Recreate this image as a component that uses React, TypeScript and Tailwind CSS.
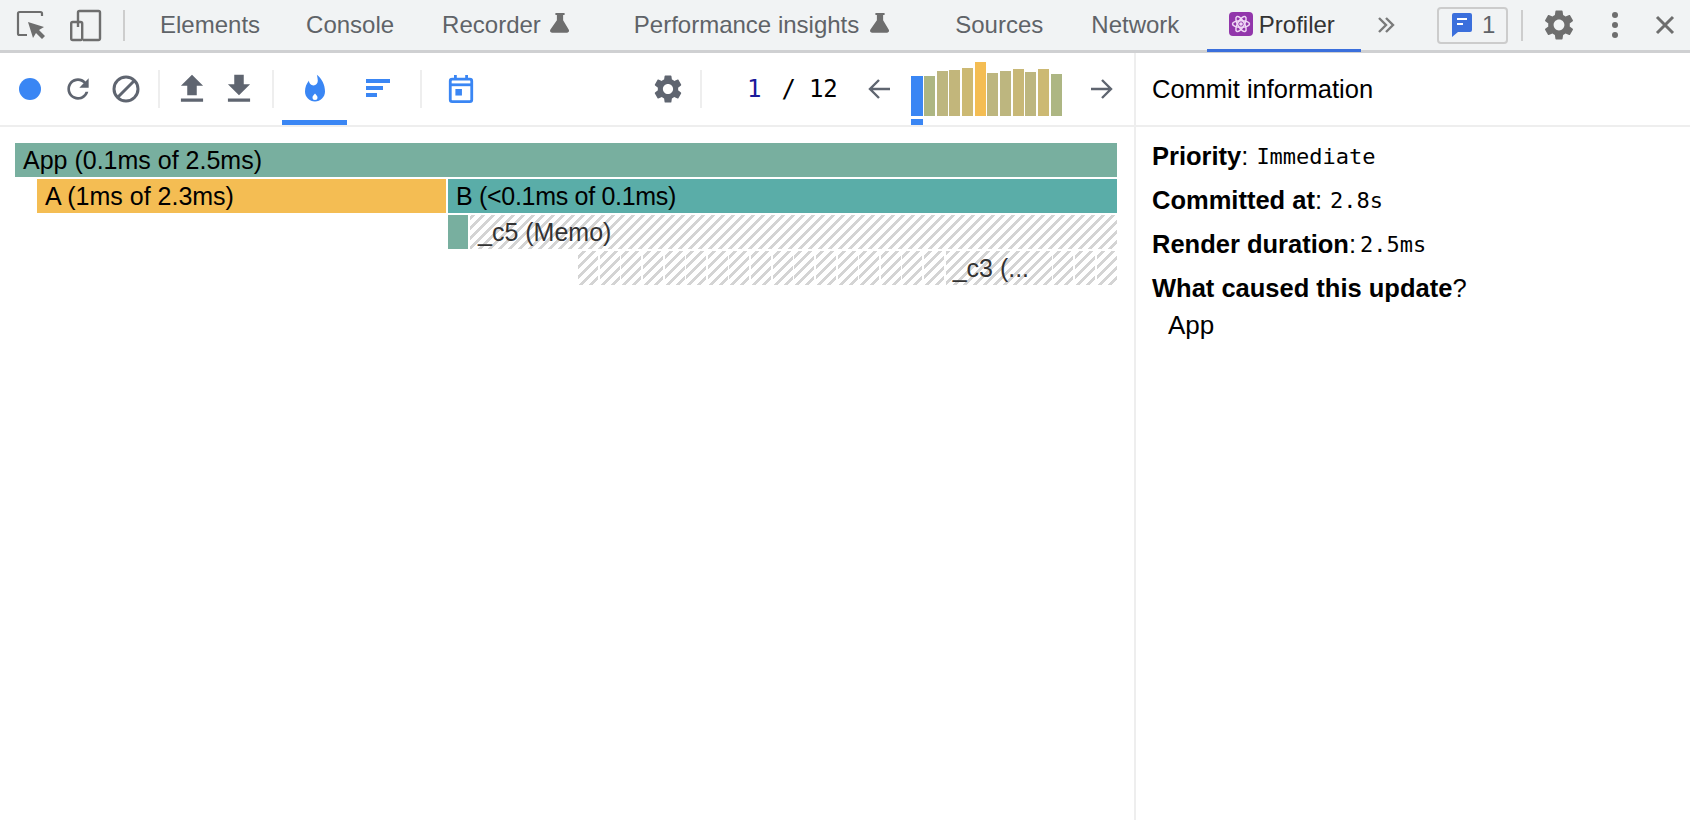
import type { ReactNode } from "react";

const GEAR =
  "M19.14 12.94c.04-.3.06-.61.06-.94 0-.32-.02-.64-.07-.94l2.03-1.58c.18-.14.23-.41.12-.61l-1.92-3.32c-.12-.22-.37-.29-.59-.22l-2.39.96c-.5-.38-1.03-.7-1.62-.94l-.36-2.54c-.04-.24-.24-.41-.48-.41h-3.84c-.24 0-.43.17-.47.41l-.36 2.54c-.59.24-1.13.57-1.62.94l-2.39-.96c-.22-.08-.47 0-.59.22L2.74 8.87c-.12.21-.08.47.12.61l2.03 1.58c-.05.3-.09.63-.09.94s.02.64.07.94l-2.03 1.58c-.18.14-.23.41-.12.61l1.92 3.32c.12.22.37.29.59.22l2.39-.96c.5.38 1.03.7 1.62.94l.36 2.54c.05.24.24.41.48.41h3.84c.24 0 .44-.17.47-.41l.36-2.54c.59-.24 1.13-.56 1.62-.94l2.39.96c.22.08.47 0 .59-.22l1.92-3.32c.12-.22.07-.47-.12-.61l-2.01-1.58zM12 15.6c-1.98 0-3.6-1.62-3.6-3.6s1.62-3.6 3.6-3.6 3.6 1.62 3.6 3.6-1.62 3.6-3.6 3.6z";

const bars = [
  { h: 40, c: "#adb683" },
  { h: 45, c: "#bdb67f" },
  { h: 46, c: "#c2b67b" },
  { h: 48, c: "#ccb973" },
  { h: 54, c: "#f4bd53" },
  { h: 43, c: "#bdb67f" },
  { h: 45, c: "#bdb67f" },
  { h: 47, c: "#c8b877" },
  { h: 44, c: "#bdb67f" },
  { h: 47, c: "#ccb973" },
  { h: 42, c: "#adb683" },
];

function Flask({ className = "ml-[10px]" }: { className?: string }) {
  return (
    <svg width="22" height="22" viewBox="0 0 24 24" className={`-mt-1 ${className}`} fill="#6e6e6e">
      <path d="M7 1h10v2.4h-1.6V9l6.2 10.4c.8 1.4-.2 3.1-1.8 3.1H3.2c-1.6 0-2.6-1.7-1.8-3.1L8.6 9V3.4H7z" />
    </svg>
  );
}

function Tab({ children, className = "" }: { children: ReactNode; className?: string }) {
  return <div className={`flex items-center px-6 text-[#5f6368] ${className}`}>{children}</div>;
}

function Divider({ className = "" }: { className?: string }) {
  return <div className={`w-[2px] h-[38px] bg-[#eeeeee] ${className}`} />;
}

function HatchPiece({ className = "", children }: { className?: string; children?: ReactNode }) {
  return (
    <div className={`h-[34px] bg-[repeating-linear-gradient(-45deg,#ffffff,#ffffff_3.9px,#d4d4d4_3.9px,#d4d4d4_7.07px)] text-[#333333] ${className}`}>
      {children}
    </div>
  );
}

function TopBar() {
  return (
    <div className="flex h-[53px] items-center border-b-[3px] border-[#cfd0d2] bg-[#f1f3f4] text-[24px]">
      <svg width="100" height="40" viewBox="0 0 100 40" className="ml-[10px] flex-none translate-y-[4px]" fill="none">
        <path d="M17 26H9.5A1.5 1.5 0 0 1 8 24.500V4.500A1.500 1.500 0 0 1 9.500 3H30.500A1.500 1.500 0 0 1 32 4.500V7" stroke="#6e6e6e" strokeWidth="2.200" />
        <path d="M18 13l16 5-5 3 6 6-3 3-6-6-3 5z" fill="#6e6e6e" />
        <path d="M68 18V3.500A1.500 1.500 0 0 1 69.500 2H88.500A1.500 1.500 0 0 1 90 3.500V29.500A1.500 1.500 0 0 1 88.500 31H73" stroke="#6e6e6e" strokeWidth="2.400" />
        <rect x="61.200" y="13" width="11" height="18" rx="1.500" stroke="#6e6e6e" strokeWidth="2.400" />
      </svg>
      <div className="ml-[13px] h-[31px] w-[2px] bg-[#cdcdcd]" />
      <Tab className="ml-[11px] pr-[22px]">Elements</Tab>
      <Tab>Console</Tab>
      <Tab className="pr-[12px]">
        Recorder
        <Flask className="ml-[8px]" />
      </Tab>
      <Tab className="pl-[51px] pr-0">
        Performance insights
        <Flask />
      </Tab>
      <Tab className="pl-[64px]">Sources</Tab>
      <Tab className="pr-[27.500px]">Network</Tab>
      <div className="-mb-[3px] flex h-[52px] self-start items-center border-b-[3px] border-[#3b6fdc] pl-[22px] pr-[26px] text-[#333333]">
        <svg width="24" height="24" viewBox="0 0 24 24" className="mr-[6px] -mt-[2px]" fill="none">
          <rect width="24" height="24" rx="4" fill="#9236ab" />
          <ellipse cx="12" cy="12" rx="8.500" ry="3.300" stroke="#f0d8f5" strokeWidth="1.500" />
          <ellipse cx="12" cy="12" rx="8.500" ry="3.300" stroke="#f0d8f5" strokeWidth="1.500" transform="rotate(60 12 12)" />
          <ellipse cx="12" cy="12" rx="8.500" ry="3.300" stroke="#f0d8f5" strokeWidth="1.500" transform="rotate(120 12 12)" />
          <circle cx="12" cy="12" r="1.800" fill="#f0d8f5" />
        </svg>
        Profiler
      </div>
      <svg width="18" height="16" viewBox="0 0 18 16" className="ml-[16px]" fill="none" stroke="#7a7a7a" strokeWidth="2.400">
        <path d="M2 1l7 7-7 7M9 1l7 7-7 7" />
      </svg>
      <div className="ml-[42px] flex h-[37px] w-[71px] items-center rounded-[4px] border-2 border-[#cccccc] pl-[12px] text-[#5f6368]">
        <svg width="22" height="26" viewBox="0 0 22 26" className="mr-[9px]">
          <path d="M3 1h16a2 2 0 0 1 2 2v15a2 2 0 0 1-2 2H7l-6 5V3a2 2 0 0 1 2-2z" fill="#3b6fdc" />
          <path d="M6 7h10M6 12h6" stroke="#ffffff" strokeWidth="2" />
        </svg>
        1
      </div>
      <div className="ml-[13px] h-[31px] w-[2px] bg-[#cdcdcd]" />
      <svg width="36" height="36" viewBox="0 0 24 24" className="ml-[18px]" fill="#6e6e6e">
        <path d={GEAR} />
      </svg>
      <svg width="8" height="28" viewBox="0 0 8 28" className="ml-[34px]" fill="#6e6e6e">
        <circle cx="4" cy="4" r="3" />
        <circle cx="4" cy="14" r="3" />
        <circle cx="4" cy="24" r="3" />
      </svg>
      <svg width="20" height="20" viewBox="0 0 20 20" className="ml-[36px]" fill="none" stroke="#6e6e6e" strokeWidth="3">
        <path d="M2 2l16 16M18 2L2 18" />
      </svg>
    </div>
  );
}

function Toolbar() {
  return (
    <div className="flex h-[74px] flex-none items-center border-b-2 border-[#eeeeee] text-[24px]">
      <div className="ml-[19px] h-[22px] w-[22px] rounded-full bg-[#3a86f4]" />
      <svg width="32" height="32" viewBox="0 0 24 24" className="ml-[21px]" fill="#5f6570">
        <path d="M17.650 6.350C16.200 4.900 14.210 4 12 4c-4.420 0-7.990 3.580-7.990 8s3.570 8 7.990 8c3.730 0 6.840-2.550 7.730-6h-2.080c-.82 2.330-3.040 4-5.650 4-3.310 0-6-2.690-6-6s2.690-6 6-6c1.660 0 3.140.69 4.220 1.780L13 11h7V4l-2.350 2.350z" />
      </svg>
      <svg width="28" height="28" viewBox="0 0 28 28" className="ml-[18px]" fill="none" stroke="#5f6570" strokeWidth="3">
        <circle cx="14" cy="14" r="12" />
        <path d="M22.500 5.500l-17 17" />
      </svg>
      <Divider className="ml-[18px]" />
      <svg width="38" height="38" viewBox="0 0 24 24" className="ml-[13px]" fill="#5f6570">
        <path d="M9 16h6v-6h4l-7-7-7 7h4zm-4 2h14v2H5z" />
      </svg>
      <svg width="38" height="38" viewBox="0 0 24 24" className="ml-[9px]" fill="#5f6570">
        <path d="M19 9h-4V3H9v6H5l7 7 7-7zM5 18v2h14v-2H5z" />
      </svg>
      <Divider className="ml-[14px]" />
      <div className="ml-[8px] flex h-full w-[65px] items-center justify-center border-b-[5px] border-[#3a86f4] pt-[5px]">
        <svg width="30" height="30" viewBox="0 0 24 24" fill="#3a86f4">
          <path d="M13.500.67s.74 2.650.74 4.800c0 2.060-1.350 3.730-3.410 3.730-2.070 0-3.630-1.670-3.630-3.730l.03-.36C5.210 7.510 4 10.620 4 14c0 4.420 3.580 8 8 8s8-3.580 8-8C20 8.610 17.410 3.800 13.500.67z" />
          <path d="M12 15.500c1.300 1.300 2 2.200 2 3.200a2 2 0 0 1-4 0c0-1 .7-1.900 2-3.200z" fill="#ffffff" />
        </svg>
      </div>
      <svg width="24" height="20" viewBox="0 0 24 20" className="ml-[19px]" fill="#3a86f4">
        <rect width="24" height="4" y="0" />
        <rect width="17" height="4" y="7" />
        <rect width="11" height="4" y="14" />
      </svg>
      <Divider className="ml-[30px]" />
      <svg width="26" height="28" viewBox="0 0 26 30" className="ml-[26px]" fill="none">
        <rect x="1.500" y="4.500" width="23" height="24" rx="2" stroke="#3a86f4" strokeWidth="3" />
        <path d="M1.500 10.500h23" stroke="#3a86f4" strokeWidth="3" />
        <path d="M7 0v5M19 0v5" stroke="#3a86f4" strokeWidth="3" />
        <rect x="7" y="15" width="7" height="7" fill="#3a86f4" />
      </svg>
      <svg width="34" height="34" viewBox="0 0 24 24" className="ml-[177px]" fill="#5f6570">
        <path d={GEAR} />
      </svg>
      <Divider className="ml-[15px]" />
      <div className="ml-[45px] flex font-['DejaVu_Sans_Mono','Liberation_Mono',monospace] text-[24px]">
        <span className="text-[#1a1a9a]">1</span>
        <span className="ml-[20px] text-black">/</span>
        <span className="ml-[13px] text-black">12</span>
      </div>
      <svg width="24" height="24" viewBox="0 0 24 24" className="ml-[29px]" fill="none" stroke="#5f6570" strokeWidth="2.400">
        <path d="M23 12H3M12 3l-9 9 9 9" />
      </svg>
      <div className="ml-[20px] flex h-full w-[12px] flex-col justify-end">
        <div className="h-[40px] bg-[#3a86f4]" />
        <div className="mt-[3px] h-[6px] bg-[#3a86f4]" />
      </div>
      <div className="ml-[1px] flex h-full items-end gap-[1.700px] pb-[9px]">
        {bars.map((b, i) => (
          <div key={i} className="w-[11px]" style={{ height: b.h, backgroundColor: b.c }} />
        ))}
      </div>
      <svg width="24" height="24" viewBox="0 0 24 24" className="ml-[28px]" fill="none" stroke="#5f6570" strokeWidth="2.400">
        <path d="M1 12h20M12 3l9 9-9 9" />
      </svg>
    </div>
  );
}

function FlameGraph() {
  const smallBefore = Array.from({ length: 17 });
  const smallAfter = Array.from({ length: 3 });
  return (
    <div className="flex flex-col gap-[2px] pl-[15px] pr-[17px] pt-[16px] text-[25px] leading-[34px] text-black">
      <div className="h-[34px] bg-[#78af9f] pl-[8px]">App (0.1ms of 2.5ms)</div>
      <div className="ml-[22px] flex gap-[2px]">
        <div className="h-[34px] w-[409px] bg-[#f4bd53] pl-[8px]">A (1ms of 2.3ms)</div>
        <div className="h-[34px] flex-1 bg-[#5aada8] pl-[8px] tracking-[-0.3px]">B (&lt;0.1ms of 0.1ms)</div>
      </div>
      <div className="ml-[433px] flex gap-[2px]">
        <div className="h-[34px] w-[20px] bg-[#78af9f]" />
        <HatchPiece className="flex-1 pl-[8px]">_c5 (Memo)</HatchPiece>
      </div>
      <div className="ml-[563px] flex gap-[1.640px]">
        {smallBefore.map((_, i) => (
          <HatchPiece key={i} className="w-[20px]" />
        ))}
        <HatchPiece className="w-[106px] pl-[7px]">_c3 (...</HatchPiece>
        {smallAfter.map((_, i) => (
          <HatchPiece key={i} className="w-[20px]" />
        ))}
      </div>
    </div>
  );
}

function Detail({ label, value, gap = "ml-[8px]" }: { label: string; value: string; gap?: string }) {
  return (
    <div className="flex h-[44px] items-center">
      <span className="font-bold">{label}</span>:
      <span className={`${gap} font-['DejaVu_Sans_Mono','Liberation_Mono',monospace] text-[22px]`}>{value}</span>
    </div>
  );
}

function CommitPanel() {
  return (
    <div className="flex-1 border-l-2 border-[#eeeeee] text-[25.500px] text-black">
      <div className="flex h-[74px] items-center border-b-2 border-[#eeeeee] pl-[16px]">Commit information</div>
      <div className="px-[16px] pt-[7px]">
        <Detail label="Priority" value="Immediate" />
        <Detail label="Committed at" value="2.8s" />
        <Detail label="Render duration" value="2.5ms" gap="ml-[4px]" />
        <div className="flex h-[44px] items-center">
          <span className="font-bold">What caused this update</span>?
        </div>
        <div className="pl-[16px] text-[26px] leading-[30px]">App</div>
      </div>
    </div>
  );
}

export default function App() {
  return (
    <div className="flex h-[820px] w-[1690px] flex-col overflow-hidden bg-white font-['Liberation_Sans',Arial,sans-serif]">
      <TopBar />
      <div className="flex flex-1">
        <div className="flex w-[1134px] flex-none flex-col">
          <Toolbar />
          <FlameGraph />
        </div>
        <CommitPanel />
      </div>
    </div>
  );
}
